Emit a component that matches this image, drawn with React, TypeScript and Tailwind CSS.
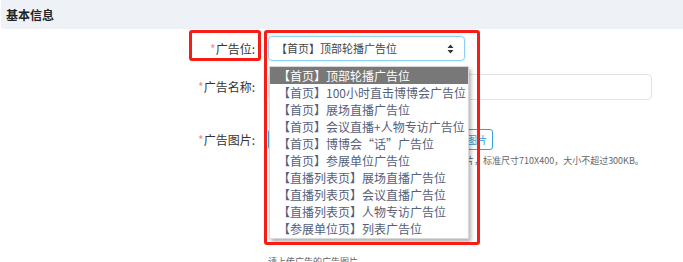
const items = [
  "【首页】顶部轮播广告位",
  "【首页】100小时直击博博会广告位",
  "【首页】展场直播广告位",
  "【首页】会议直播+人物专访广告位",
  "【首页】博博会“话”广告位",
  "【首页】参展单位广告位",
  "【直播列表页】展场直播广告位",
  "【直播列表页】会议直播广告位",
  "【直播列表页】人物专访广告位",
  "【参展单位页】列表广告位",
];

const Label = ({ text }: { text: string }) => (
  <div className="w-[258px] shrink-0 pr-[3px] text-right text-[12px] text-[#333]">
    <span className="text-[#f78989]">*</span>
    {text}:
  </div>
);

export default function App() {
  return (
    <div className="relative h-[262px] w-[683px] overflow-hidden bg-white font-['Noto_Sans_CJK_SC',sans-serif]">
      <div className="ml-px flex h-[29px] items-center rounded-bl-[3px] bg-[#eef1f6] pl-[5px] text-[12px] font-bold text-[#222]">
        基本信息
      </div>

      <div className="flex flex-col">
        <div className="mt-[7px] flex h-[25px] items-center">
          <Label text="广告位" />
          <div className="ml-[10px] flex h-[25px] w-[197px] items-center justify-between rounded-[4px] border border-[#8fd0ef] pl-[7px] pr-[10px] text-[11px] text-[#444] shadow-[0_0_2px_#a8dcf3]">
            <span>【首页】顶部轮播广告位</span>
            <svg width="7" height="10" viewBox="0 0 7 10">
              <path d="M3.5 0.5L6.5 4H0.5z M3.5 9.5L6.5 6H0.5z" fill="#333" />
            </svg>
          </div>
        </div>

        <div className="mt-[13px] flex h-[26px] items-center">
          <Label text="广告名称" />
          <div className="ml-[10px] h-[26px] w-[384px] rounded-[4px] border border-[#e2e2e2]" />
        </div>

        <div className="mt-[29px] flex h-[21px] items-center">
          <Label text="广告图片" />
          <div className="ml-[10px] flex h-[21px] w-[225px] items-center justify-end rounded-[3px] border border-[#35a4de] pr-[5px] text-[10px] text-[#2a9ad8]">
            上传图片
          </div>
        </div>

        <div className="mt-[4px] flex">
          <div className="w-[411px] shrink-0" />
          <div className="text-[9px] leading-[14px] text-[#666]">
            请上传广告图片，标准尺寸710X400，大小不超过300KB。
          </div>
        </div>

        <div className="mt-[88px] flex">
          <div className="w-[268px] shrink-0" />
          <div className="text-[9px] leading-[12px] text-[#666]">请上传广告的广告图片</div>
        </div>
      </div>

      <div className="absolute left-[269px] top-[66px] w-[200px] border border-[#d8d8d8] bg-white pb-px shadow-[2px_3px_4px_rgba(0,0,0,0.3)]">
        {items.map((item, i) => (
          <div
            key={item}
            className={`flex h-[17px] items-center pl-[8px] text-[12px] ${
              i === 0 ? "bg-[#787878] text-white" : "text-[#56607a]"
            }`}
          >
            {item}
          </div>
        ))}
      </div>

      <div className="absolute left-[189px] top-[30px] h-[31px] w-[72px] rounded-[3px] border-[3px] border-[#f51d16]" />
      <div className="absolute left-[264px] top-[30px] h-[215px] w-[216px] rounded-[3px] border-[3px] border-[#f51d16]" />
    </div>
  );
}
